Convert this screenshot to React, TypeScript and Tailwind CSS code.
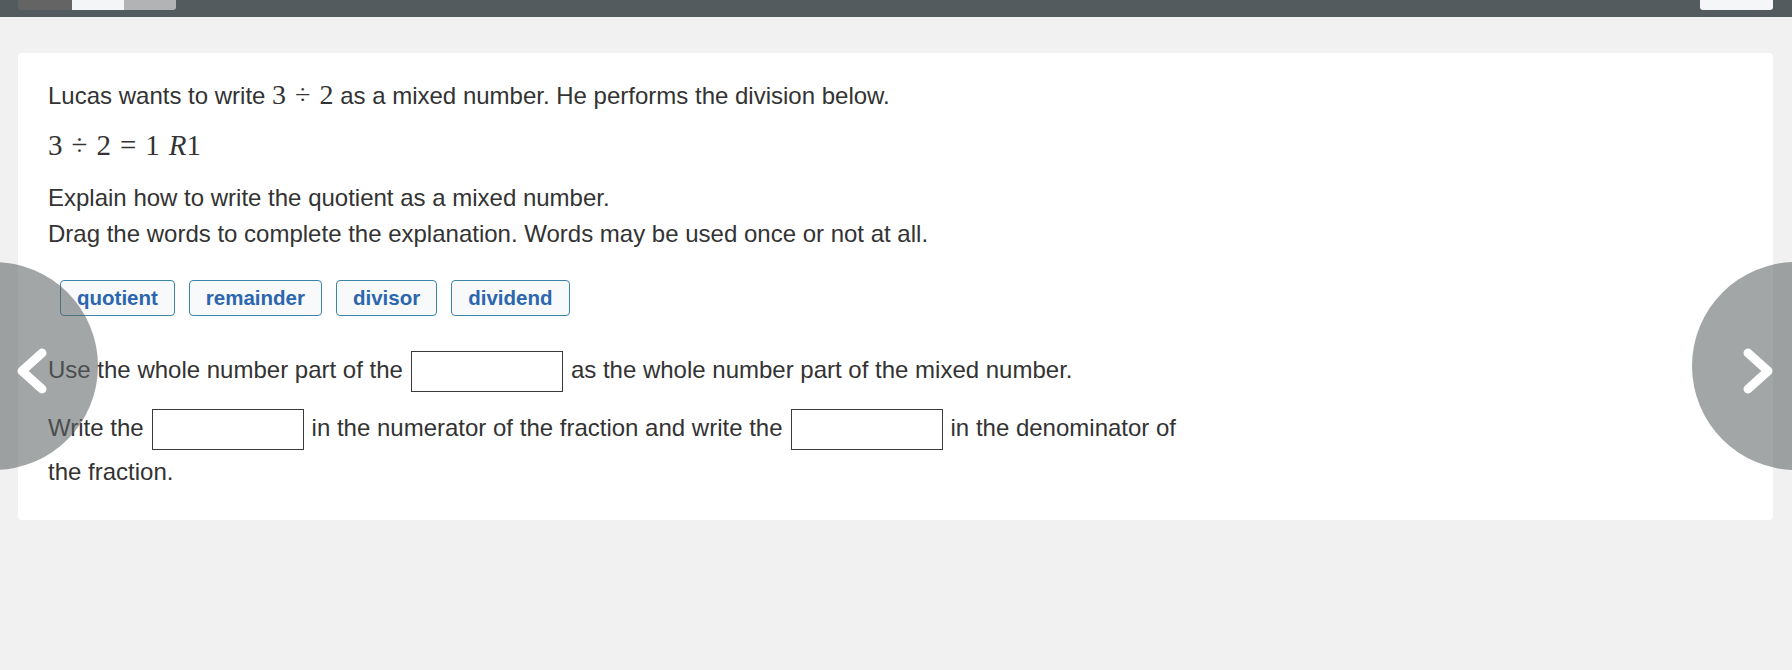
import React from "react";

const sans = { fontFamily: '"Liberation Sans", Arial, sans-serif' };
const serif = { fontFamily: '"Liberation Serif", "Times New Roman", serif' };

function Op({ children }: { children: React.ReactNode }) {
  return <span className="mx-[9px]">{children}</span>;
}

function Blank() {
  return (
    <span className="mx-[8px] inline-block h-[41px] w-[152px] border border-[#3a3a3a] bg-white align-middle"></span>
  );
}

function Chip({ label }: { label: string }) {
  return (
    <div className="rounded-[4px] border border-[#3b85a6] bg-[#f7f9fa] px-[16px] text-[20.5px] font-bold leading-[34px] text-[#2b66ae]">
      {label}
    </div>
  );
}

function NavButton({ side }: { side: "left" | "right" }) {
  const left = side === "left";
  return (
    <div
      className={
        "absolute top-[262px] h-[208px] w-[208px] rounded-full bg-[rgba(94,98,100,0.57)] " +
        (left ? "left-[-110px]" : "left-[1692px]")
      }
    >
      <svg
        className={"absolute top-[86px] h-[46px] w-[32px] " + (left ? "right-[50px]" : "left-[50px]")}
        viewBox="0 0 32 46"
        fill="none"
        stroke="white"
        strokeWidth="9"
        strokeLinecap="round"
        strokeLinejoin="round"
      >
        {left ? <polyline points="26,5 6,23 26,41" /> : <polyline points="6,5 26,23 6,41" />}
      </svg>
    </div>
  );
}

export default function App() {
  return (
    <div className="relative h-[670px] w-[1792px] overflow-hidden bg-[#f1f1f1] text-[#333333]" style={sans}>
      {/* top bar */}
      <div className="flex h-[17px] items-start bg-[#545b5e] pl-[18px] pr-[19px]">
        <div className="h-[10px] w-[54px] rounded-bl-[3px] bg-[#646464]"></div>
        <div className="h-[10px] w-[52px] bg-[#f3f5f6]"></div>
        <div className="h-[10px] w-[52px] rounded-br-[3px] bg-[#b1b3b4]"></div>
        <div className="flex-1"></div>
        <div className="h-[10px] w-[73px] rounded-b-[3px] bg-[#f5f6f7]"></div>
      </div>

      {/* card */}
      <div className="ml-[18px] mt-[36px] h-[467px] w-[1755px] rounded-[4px] bg-white px-[30px] pt-[24px]">
        <div className="max-w-[1140px] text-[24px]">
          <p className="leading-[36px]">
            Lucas wants to write{" "}
            <span className="text-[28px]" style={serif}>
              3<Op>÷</Op>2
            </span>{" "}
            as a mixed number. He performs the division below.
          </p>
          <p className="mt-[13px] text-[29px] leading-[36px]" style={serif}>
            3<Op>÷</Op>2<Op>=</Op>1<span className="ml-[9px] italic">R</span>1
          </p>
          <p className="mt-[17px] leading-[36px]">Explain how to write the quotient as a mixed number.</p>
          <p className="leading-[36px]">Drag the words to complete the explanation. Words may be used once or not at all.</p>

          <div className="mt-[28px] flex gap-[14px] pl-[12px]">
            <Chip label="quotient" />
            <Chip label="remainder" />
            <Chip label="divisor" />
            <Chip label="dividend" />
          </div>

          <p className="mt-[32px] leading-[44px]">
            Use the whole number part of the
            <Blank />
            as the whole number part of the mixed number.
          </p>
          <p className="mt-[14px] leading-[44px]">
            Write the
            <Blank />
            in the numerator of the fraction and write the
            <Blank />
            in the denominator of the fraction.
          </p>
        </div>
      </div>

      <NavButton side="left" />
      <NavButton side="right" />
    </div>
  );
}
